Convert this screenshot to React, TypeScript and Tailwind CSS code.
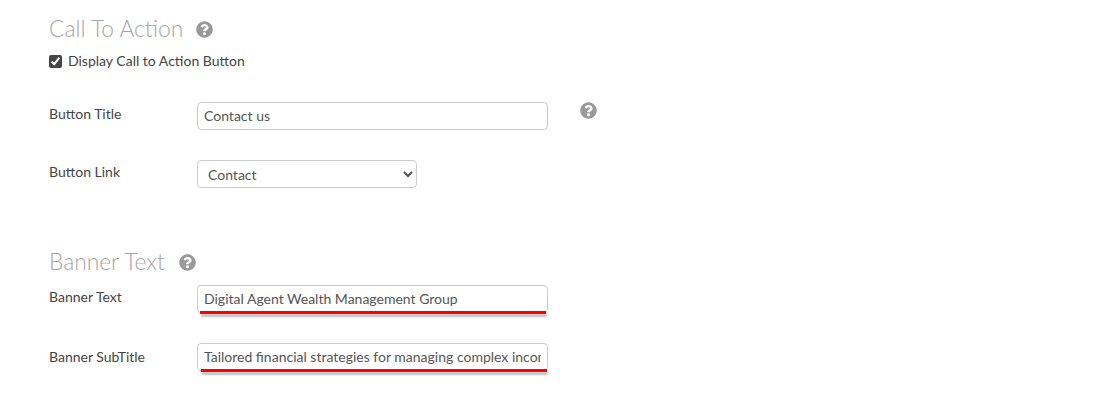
import { FaQuestionCircle } from "react-icons/fa";

const font = { fontFamily: "Lato, sans-serif" };

function SectionTitle({ title, gap }: { title: string; gap: string }) {
  return (
    <div className={`flex items-center h-[30px] ${gap}`}>
      <h2 className="text-[22.75px] leading-[30px] font-light text-[#a6a6a6]">{title}</h2>
      <FaQuestionCircle className="w-[17px] h-[17px] text-[#999]" />
    </div>
  );
}

function MarkedInput({ value, markLeft, markWidth }: { value: string; markLeft: string; markWidth: string }) {
  return (
    <div className="relative w-[351px] h-[28px]">
      <input
        type="text"
        readOnly
        value={value}
        className="w-full h-full px-[6px] pb-[2px] rounded-[4px] border border-[#ccc] bg-white text-[14px] text-[#555] outline-none"
      />
      <div className={`absolute top-[26px] h-[3px] bg-[#ff0000] shadow-[1px_3px_2px_rgba(0,0,0,0.25)] ${markLeft} ${markWidth}`} />
    </div>
  );
}

export default function App() {
  return (
    <div className="w-[1119px] h-[401px] bg-white pl-[49px] pt-[14px] overflow-hidden text-[14px] text-[#444]" style={font}>
      <SectionTitle title="Call To Action" gap="gap-[13px]" />

      <label className="flex items-center gap-[6px] mt-[7px] h-[20px]">
        <input type="checkbox" readOnly checked className="w-[13px] h-[13px] accent-[#444]" />
        <span className="-translate-y-px">Display Call to Action Button</span>
      </label>

      <div className="flex mt-[31px] h-[28px]">
        <span className="w-[148px] leading-[24px]">Button Title</span>
        <input
          type="text"
          readOnly
          value="Contact us"
          className="w-[351px] h-[28px] px-[6px] pb-[2px] rounded-[4px] border border-[#ccc] bg-white text-[14px] text-[#555] outline-none"
        />
        <FaQuestionCircle className="w-[17px] h-[17px] ml-[32px] text-[#999]" />
      </div>

      <div className="flex mt-[30px] h-[28px]">
        <span className="w-[148px] leading-[24px]">Button Link</span>
        <select
          defaultValue="Contact"
          className="w-[220px] h-[28px] px-[6px] rounded-[4px] border border-[#ccc] bg-white text-[14px] text-[#555] outline-none"
        >
          <option>Contact</option>
        </select>
      </div>

      <div className="mt-[59px]">
        <SectionTitle title="Banner Text" gap="gap-[14px]" />
      </div>

      <div className="flex mt-[8px] h-[28px]">
        <span className="w-[148px] leading-[24px]">Banner Text</span>
        <MarkedInput value="Digital Agent Wealth Management Group" markLeft="left-[3px]" markWidth="w-[346px]" />
      </div>

      <div className="flex mt-[30px] h-[28px]">
        <span className="w-[148px] leading-[28px]">Banner SubTitle</span>
        <MarkedInput value="Tailored financial strategies for managing complex income streams" markLeft="left-[4px]" markWidth="w-[346px]" />
      </div>
    </div>
  );
}
